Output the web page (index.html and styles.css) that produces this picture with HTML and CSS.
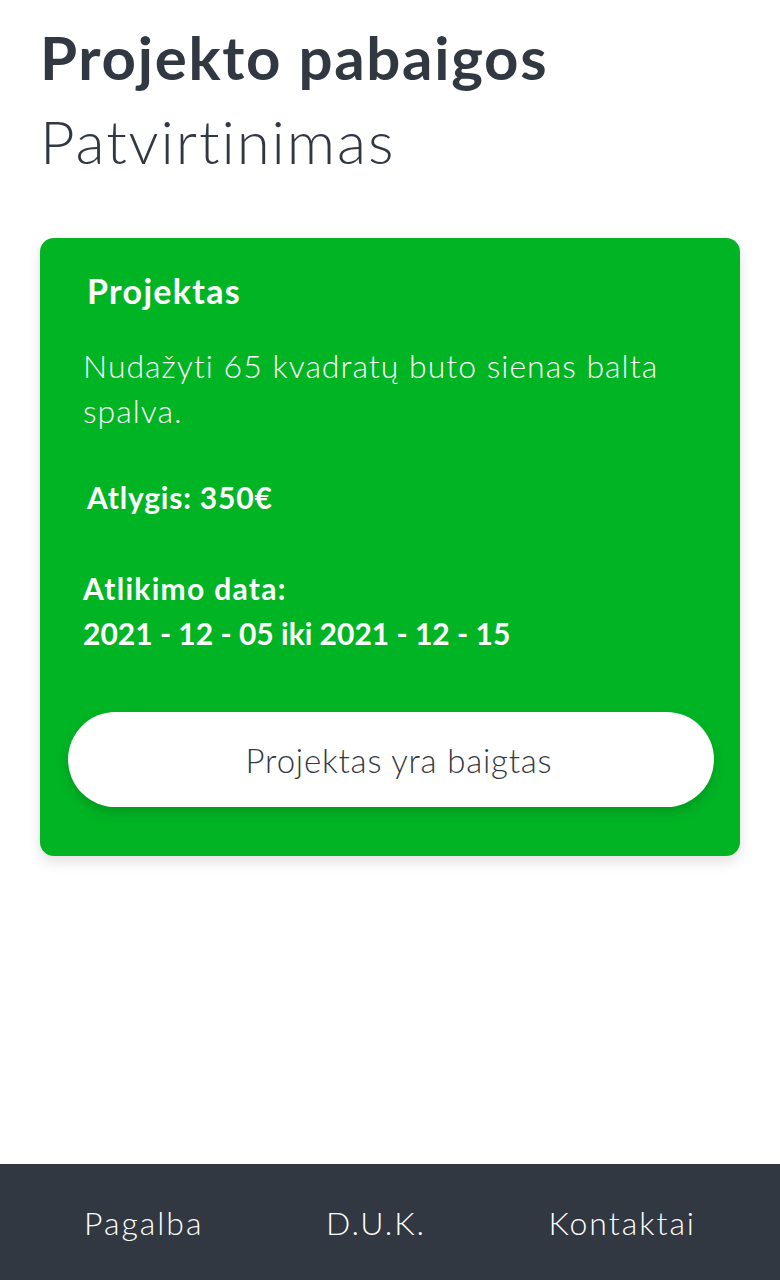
FILE: index.html
```html
<!DOCTYPE html>
<html lang="lt">
<head>
<meta charset="utf-8">
<title>Projekto pabaigos patvirtinimas</title>
<link rel="stylesheet" href="styles.css">
</head>
<body>
<div class="page">
  <main class="content">
    <h1 class="title">
      <span class="title-bold">Projekto pabaigos</span>
      <span class="title-light">Patvirtinimas</span>
    </h1>
    <section class="card">
      <h2 class="card-title">Projektas</h2>
      <p class="card-desc">Nudažyti 65 kvadratų buto sienas balta spalva.</p>
      <p class="card-reward">Atlygis: 350€</p>
      <div class="card-date">
        <div class="card-date-label">Atlikimo data:</div>
        <div>2021 - 12 - 05 iki 2021 - 12 - 15</div>
      </div>
      <button class="card-button" type="button">Projektas yra baigtas</button>
    </section>
  </main>
  <footer class="footer">
    <a class="footer-link" href="#">Pagalba</a>
    <a class="footer-link" href="#">D.U.K.</a>
    <a class="footer-link" href="#">Kontaktai</a>
  </footer>
</div>
</body>
</html>
```

FILE: styles.css
```css
* { box-sizing: border-box; }
html, body { margin: 0; padding: 0; }
body {
  font-family: "Lato", "Noto Sans", sans-serif;
  color: #323842;
  background: #ffffff;
}
.page {
  min-height: 1280px;
  display: flex;
  flex-direction: column;
}
.content {
  flex: 1;
  padding: 15px 40px 0 40px;
}
.title {
  margin: 0;
  display: flex;
  flex-direction: column;
  font-size: 60px;
  line-height: 84px;
}
.title-bold { font-weight: 700; letter-spacing: 1.7px; }
.title-light { font-weight: 300; letter-spacing: 1.9px; }
.card {
  margin-top: 55px;
  background: #01b424;
  border-radius: 14px;
  padding: 30px 26px 49px 28px;
  color: #ffffff;
  box-shadow: 0 6px 14px rgba(0,0,0,0.12);
}
.card-title {
  margin: 0 0 0 19px;
  font-size: 34px;
  font-weight: 700;
  letter-spacing: 1.3px;
  line-height: 46px;
}
.card-desc {
  margin: 29px 0 0 15px;
  max-width: 600px;
  font-size: 32px;
  font-weight: 300;
  letter-spacing: 1px;
  line-height: 45px;
}
.card-reward {
  margin: 42px 0 0 19px;
  font-size: 30px;
  font-weight: 700;
  letter-spacing: 0.8px;
  line-height: 44px;
}
.card-date {
  margin: 47px 0 0 15px;
  font-size: 30px;
  font-weight: 700;
  line-height: 45px;
}
.card-date-label { letter-spacing: 1.3px; }
.card-button {
  display: block;
  width: 100%;
  margin-top: 56px;
  height: 95px;
  padding: 0 0 0 16px;
  border: none;
  border-radius: 48px;
  background: #ffffff;
  color: #323842;
  font-family: inherit;
  font-size: 33px;
  font-weight: 300;
  letter-spacing: 0.8px;
  box-shadow: 0 6px 12px rgba(0,0,0,0.14);
}
.footer {
  height: 116px;
  background: #323842;
  display: flex;
  justify-content: space-between;
  align-items: center;
  padding: 0 84px;
}
.footer-link {
  color: #ffffff;
  text-decoration: none;
  font-size: 32px;
  font-weight: 300;
  letter-spacing: 2px;
}
```
